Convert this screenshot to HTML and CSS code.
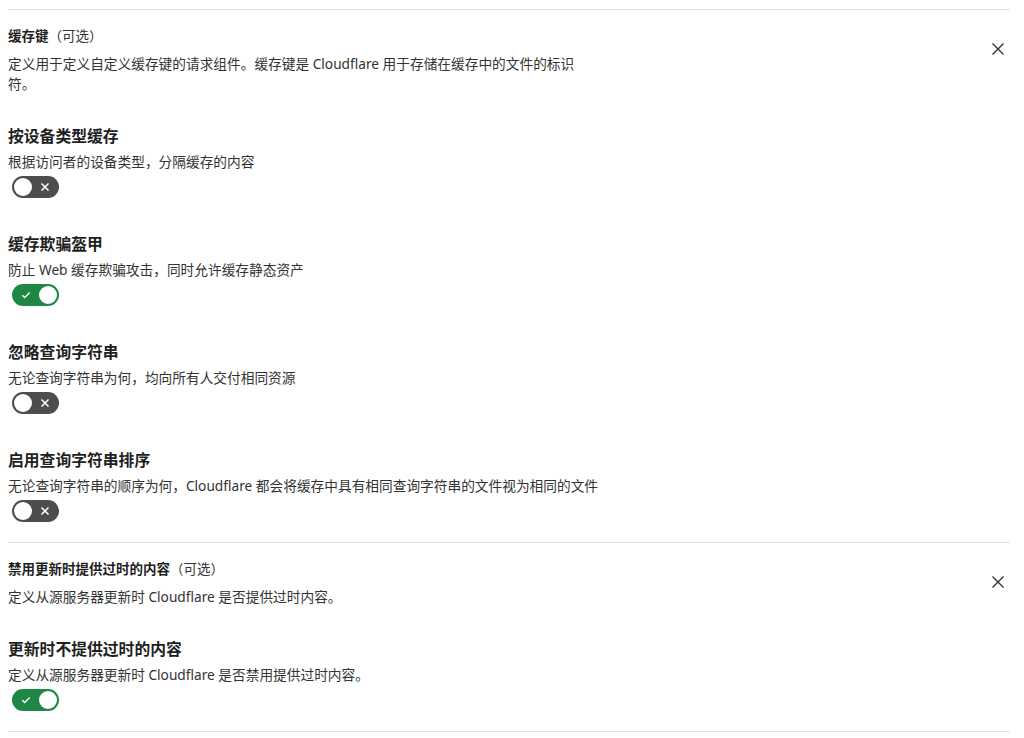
FILE: index.html
```html
<!DOCTYPE html>
<html lang="zh-CN">
<head>
    <meta charset="UTF-8">
    <meta name="viewport" content="width=device-width, initial-scale=1.0">
    <title>缓存规则</title>
    <link rel="stylesheet" href="styles.css">
</head>
<body>
    <div class="rule-panel">
        <section class="rule-block">
            <div class="block-head">
                <div class="block-intro">
                    <h3 class="block-title">缓存键<span class="optional">（可选）</span></h3>
                    <p class="block-desc">定义用于定义自定义缓存键的请求组件。缓存键是 Cloudflare 用于存储在缓存中的文件的标识符。</p>
                </div>
                <button class="close-btn" aria-label="移除">
                    <svg width="14" height="14" viewBox="0 0 14 14"><path d="M1.5 1.5l11 11M12.5 1.5l-11 11" stroke="#333" stroke-width="1.4" fill="none"/></svg>
                </button>
            </div>

            <div class="setting">
                <h4 class="setting-title">按设备类型缓存</h4>
                <p class="setting-desc">根据访问者的设备类型，分隔缓存的内容</p>
                <button class="toggle" role="switch" aria-checked="false">
                    <span class="toggle-knob"></span>
                    <svg class="toggle-mark" width="10" height="10" viewBox="0 0 10 10"><path d="M1.5 1.5l7 7M8.5 1.5l-7 7" stroke="#fff" stroke-width="1.5" fill="none"/></svg>
                </button>
            </div>

            <div class="setting">
                <h4 class="setting-title">缓存欺骗盔甲</h4>
                <p class="setting-desc">防止 Web 缓存欺骗攻击，同时允许缓存静态资产</p>
                <button class="toggle on" role="switch" aria-checked="true">
                    <svg class="toggle-mark" width="10" height="10" viewBox="0 0 10 10"><path d="M1.3 5.2l2.4 2.3 5-5" stroke="#fff" stroke-width="1.4" fill="none"/></svg>
                    <span class="toggle-knob"></span>
                </button>
            </div>

            <div class="setting">
                <h4 class="setting-title">忽略查询字符串</h4>
                <p class="setting-desc">无论查询字符串为何，均向所有人交付相同资源</p>
                <button class="toggle" role="switch" aria-checked="false">
                    <span class="toggle-knob"></span>
                    <svg class="toggle-mark" width="10" height="10" viewBox="0 0 10 10"><path d="M1.5 1.5l7 7M8.5 1.5l-7 7" stroke="#fff" stroke-width="1.5" fill="none"/></svg>
                </button>
            </div>

            <div class="setting">
                <h4 class="setting-title">启用查询字符串排序</h4>
                <p class="setting-desc">无论查询字符串的顺序为何，Cloudflare 都会将缓存中具有相同查询字符串的文件视为相同的文件</p>
                <button class="toggle" role="switch" aria-checked="false">
                    <span class="toggle-knob"></span>
                    <svg class="toggle-mark" width="10" height="10" viewBox="0 0 10 10"><path d="M1.5 1.5l7 7M8.5 1.5l-7 7" stroke="#fff" stroke-width="1.5" fill="none"/></svg>
                </button>
            </div>
        </section>

        <section class="rule-block">
            <div class="block-head">
                <div class="block-intro">
                    <h3 class="block-title">禁用更新时提供过时的内容<span class="optional">（可选）</span></h3>
                    <p class="block-desc">定义从源服务器更新时 Cloudflare 是否提供过时内容。</p>
                </div>
                <button class="close-btn" aria-label="移除">
                    <svg width="14" height="14" viewBox="0 0 14 14"><path d="M1.5 1.5l11 11M12.5 1.5l-11 11" stroke="#333" stroke-width="1.4" fill="none"/></svg>
                </button>
            </div>

            <div class="setting">
                <h4 class="setting-title">更新时不提供过时的内容</h4>
                <p class="setting-desc">定义从源服务器更新时 Cloudflare 是否禁用提供过时内容。</p>
                <button class="toggle on" role="switch" aria-checked="true">
                    <svg class="toggle-mark" width="10" height="10" viewBox="0 0 10 10"><path d="M1.3 5.2l2.4 2.3 5-5" stroke="#fff" stroke-width="1.4" fill="none"/></svg>
                    <span class="toggle-knob"></span>
                </button>
            </div>
        </section>
    </div>
</body>
</html>
```

FILE: styles.css
```css
* {
    margin: 0;
    padding: 0;
    box-sizing: border-box;
}

body {
    background: #fff;
    font-family: "Noto Sans", "Noto Sans CJK SC", sans-serif;
    color: #222;
    padding: 9px 14px 0 8px;
}

.rule-block {
    border-top: 1px solid #e4e4e4;
    padding: 16px 0 20px;
}

.rule-block:last-child {
    border-bottom: 1px solid #e4e4e4;
}

.block-head {
    display: flex;
    justify-content: space-between;
    align-items: flex-start;
}

.block-intro {
    max-width: 582px;
}

.block-title {
    font-size: 13.5px;
    font-weight: 700;
    line-height: 20px;
    color: #1f1f1f;
}

.optional {
    font-weight: 400;
    color: #333;
}

.block-desc {
    margin-top: 8px;
    font-size: 13.7px;
    line-height: 20px;
    color: #333;
}

.close-btn {
    width: 24px;
    height: 24px;
    margin-top: 11px;
    display: flex;
    align-items: center;
    justify-content: center;
    background: none;
    border: none;
    cursor: pointer;
}

.setting {
    margin-top: 30px;
}

.setting + .setting {
    margin-top: 34px;
}

.setting-title {
    font-size: 15.8px;
    font-weight: 700;
    line-height: 24px;
    color: #1f1f1f;
}

.setting-desc {
    margin-top: 4px;
    font-size: 13.7px;
    line-height: 20px;
    color: #333;
}

/* switch: knob sits on the side of its state, mark on the other */
.toggle {
    margin: 4px 0 0 4px;
    width: 47px;
    height: 22px;
    border-radius: 11px;
    border: none;
    background: #4d4d4d;
    display: flex;
    align-items: center;
    justify-content: space-between;
    padding: 0 9px 0 2px;
    cursor: pointer;
}

.toggle.on {
    background: #1f8746;
    padding: 0 2px 0 9px;
}

.toggle-knob {
    width: 18px;
    height: 18px;
    border-radius: 50%;
    background: #fff;
}

.toggle-mark {
    display: block;
}
```
